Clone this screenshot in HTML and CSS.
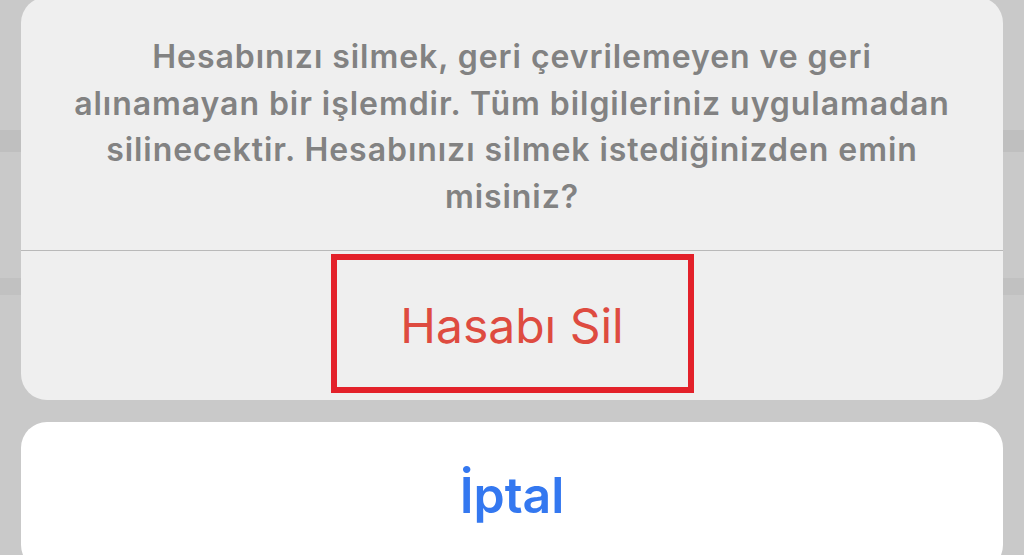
FILE: index.html
```html
<!DOCTYPE html>
<html lang="tr">
<head>
    <meta charset="UTF-8">
    <meta name="viewport" content="width=device-width, initial-scale=1.0">
    <title>Hesabı Sil</title>
    <link rel="stylesheet" href="styles.css">
</head>
<body>
    <div class="sheet">
        <div class="sheet-group">
            <p class="sheet-message">Hesabınızı silmek, geri çevrilemeyen ve geri<br>alınamayan bir işlemdir. Tüm bilgileriniz uygulamadan<br>silinecektir. Hesabınızı silmek istediğinizden emin<br>misiniz?</p>
            <div class="sheet-action">
                <span class="highlight">
                    <span class="btn-destructive">Hasabı Sil</span>
                </span>
            </div>
        </div>
        <div class="sheet-cancel">
            <span class="btn-cancel">İptal</span>
        </div>
    </div>
</body>
</html>
```

FILE: styles.css
```css
html, body {
    height: 100%;
}
body {
    margin: 0;
    overflow: hidden;
    font-family: Inter, "Noto Sans", sans-serif;
    background-color: #c9c9c9;
    /* blurred list rows behind the sheet */
    background-image: linear-gradient(180deg,
        transparent 0, transparent 130px,
        #bfbfbf 130px, #bfbfbf 152px,
        transparent 152px, transparent 278px,
        #c1c1c1 278px, #c1c1c1 295px,
        transparent 295px);
}
.sheet {
    margin: -3px 21px 0 21px;
    display: flex;
    flex-direction: column;
    gap: 22px;
}
.sheet-group {
    background: #efefef;
    border-radius: 26px;
    height: 403px;
    display: flex;
    flex-direction: column;
    overflow: hidden;
}
.sheet-message {
    margin: 0;
    padding: 37px 10px 0 10px;
    height: 216px;
    text-align: center;
    font-size: 32px;
    font-weight: 600;
    line-height: 46.5px;
    color: #828282;
    letter-spacing: 0.95px;
    border-bottom: 1px solid #b9b9b9;
}
.sheet-action {
    flex: 1;
    display: flex;
    align-items: center;
    justify-content: center;
}
.highlight {
    box-sizing: border-box;
    width: 363px;
    height: 139px;
    margin-top: -4px;
    border: 6px solid #e3212a;
    display: flex;
    align-items: center;
    justify-content: center;
}
.btn-destructive {
    font-size: 48px;
    font-weight: 400;
    color: #de4b40;
    margin-top: 4px;
}
.sheet-cancel {
    background: #ffffff;
    border-radius: 26px;
    height: 149px;
    display: flex;
    align-items: center;
    justify-content: center;
}
.btn-cancel {
    font-size: 50px;
    font-weight: 600;
    color: #3478f0;
    margin-top: -4px;
}
```
